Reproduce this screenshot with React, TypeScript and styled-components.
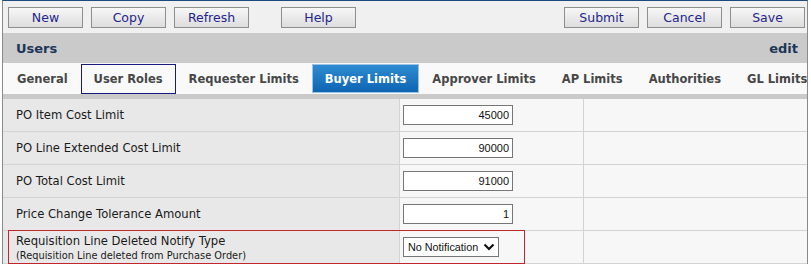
import React from "react";
import styled, { createGlobalStyle, css } from "styled-components";

const GlobalStyle = createGlobalStyle`
  html, body { margin: 0; padding: 0; background: #ffffff; }
  body { font-family: "DejaVu Sans", Verdana, sans-serif; }
  * { box-sizing: border-box; }
`;

const Panel = styled.div`
  margin-left: 2px;
  width: 806px;
  border-top: 1px solid #1b4a7c;
  border-left: 1px solid #8a8a8a;
  border-right: 1px solid #8a8a8a;
  background: #f7f7f7;
`;

const Toolbar = styled.div`
  height: 32px;
  background: #f0f0f0;
  display: flex;
  align-items: center;
  gap: 8px;
  padding: 0 2px 0 5px;
`;

const Button = styled.button<{ $spaced?: boolean; $pushRight?: boolean }>`
  width: 75px;
  height: 21px;
  margin-top: 1px;
  padding: 0;
  border: 1px solid #8e8e8e;
  background: linear-gradient(#f7f7f7, #dddddd);
  color: #25258a;
  font-family: "DejaVu Sans", Verdana, sans-serif;
  font-size: 12.5px;
  line-height: 19px;
  cursor: pointer;
  ${(p) => p.$spaced && css`margin-left: 24px;`}
  ${(p) => p.$pushRight && css`margin-left: auto;`}
`;

const HeaderBar = styled.div`
  height: 30px;
  background: #c9cac9;
  display: flex;
  align-items: center;
  justify-content: space-between;
  padding: 1px 9px 0 13px;
  font-weight: bold;
  font-size: 13px;
  color: #1d3658;
`;

const TabBar = styled.div`
  height: 31px;
  background: #f9f9f9;
  display: flex;
  align-items: flex-start;
  padding-left: 1px;
  overflow: hidden;
  white-space: nowrap;
`;

const Tab = styled.div<{ $active?: boolean; $focused?: boolean }>`
  flex: none;
  height: 30px;
  margin-top: 1px;
  padding: 0 12px;
  display: flex;
  align-items: center;
  font-weight: bold;
  font-size: 11.5px;
  color: #474747;
  border: 1px solid transparent;
  ${(p) =>
    p.$focused &&
    css`
      border-color: #1a1a7e;
    `}
  ${(p) =>
    p.$active &&
    css`
      height: 29px;
      background: linear-gradient(#2f8bd1, #0e65b2);
      border-color: #9cc2e3;
      color: #ffffff;
    `}
`;

const Separator = styled.div`
  height: 5px;
  background: #c9cac9;
`;

const Row = styled.div`
  position: relative;
  display: grid;
  grid-template-columns: 397px 184px 1fr;
  height: 33px;
  border-bottom: 1px solid #d3d3d3;
`;

const LabelCell = styled.div`
  background: #e8e8e8;
  border-right: 1px solid #d3d3d3;
  padding-left: 13px;
  display: flex;
  flex-direction: column;
  justify-content: center;
  font-size: 11.6px;
  color: #1a1a1a;
`;

const SubLabel = styled.span`
  font-size: 9.8px;
  margin-top: 2px;
`;

const ValueCell = styled.div`
  background: #f7f7f7;
  border-right: 1px solid #d3d3d3;
  padding-left: 3px;
  display: flex;
  align-items: center;
`;

const EmptyCell = styled.div`
  background: #f7f7f7;
`;

const NumberInput = styled.input`
  width: 110px;
  height: 20px;
  border: 1px solid #767676;
  background: #ffffff;
  padding: 0 3px 0 0;
  text-align: right;
  font-family: "Liberation Sans", Arial, sans-serif;
  font-size: 11px;
  color: #111111;
`;

const SelectBox = styled.div`
  width: 96px;
  height: 20px;
  border: 1px solid #767676;
  background: #ffffff;
  display: flex;
  align-items: center;
  justify-content: space-between;
  padding: 0 3px 0 4px;
  font-family: "Liberation Sans", Arial, sans-serif;
  font-size: 10.8px;
  color: #111111;
`;

const Highlight = styled.div`
  position: absolute;
  left: 5px;
  top: -1px;
  width: 517px;
  height: 34px;
  border: 1px solid #c0262c;
  pointer-events: none;
`;

const limits = [
  { label: "PO Item Cost Limit", value: "45000" },
  { label: "PO Line Extended Cost Limit", value: "90000" },
  { label: "PO Total Cost Limit", value: "91000" },
  { label: "Price Change Tolerance Amount", value: "1" },
];

const tabs = [
  "General",
  "User Roles",
  "Requester Limits",
  "Buyer Limits",
  "Approver Limits",
  "AP Limits",
  "Authorities",
  "GL Limits",
];

export default function App() {
  return (
    <>
      <GlobalStyle />
      <Panel>
        <Toolbar>
          <Button>New</Button>
          <Button>Copy</Button>
          <Button>Refresh</Button>
          <Button $spaced>Help</Button>
          <Button $pushRight>Submit</Button>
          <Button>Cancel</Button>
          <Button>Save</Button>
        </Toolbar>
        <HeaderBar>
          <span>Users</span>
          <span>edit</span>
        </HeaderBar>
        <TabBar>
          {tabs.map((t) => (
            <Tab key={t} $active={t === "Buyer Limits"} $focused={t === "User Roles"}>
              {t}
            </Tab>
          ))}
        </TabBar>
        <Separator />
        {limits.map((l) => (
          <Row key={l.label}>
            <LabelCell>{l.label}</LabelCell>
            <ValueCell>
              <NumberInput readOnly value={l.value} />
            </ValueCell>
            <EmptyCell />
          </Row>
        ))}
        <Row>
          <LabelCell>
            <span>Requisition Line Deleted Notify Type</span>
            <SubLabel>(Requisition Line deleted from Purchase Order)</SubLabel>
          </LabelCell>
          <ValueCell>
            <SelectBox>
              <span>No Notification</span>
              <svg width="12" height="8" viewBox="0 0 12 8">
                <path d="M1.5 1.5 L6 6 L10.5 1.5" fill="none" stroke="#111" strokeWidth="2.2" />
              </svg>
            </SelectBox>
          </ValueCell>
          <EmptyCell />
          <Highlight />
        </Row>
      </Panel>
    </>
  );
}
